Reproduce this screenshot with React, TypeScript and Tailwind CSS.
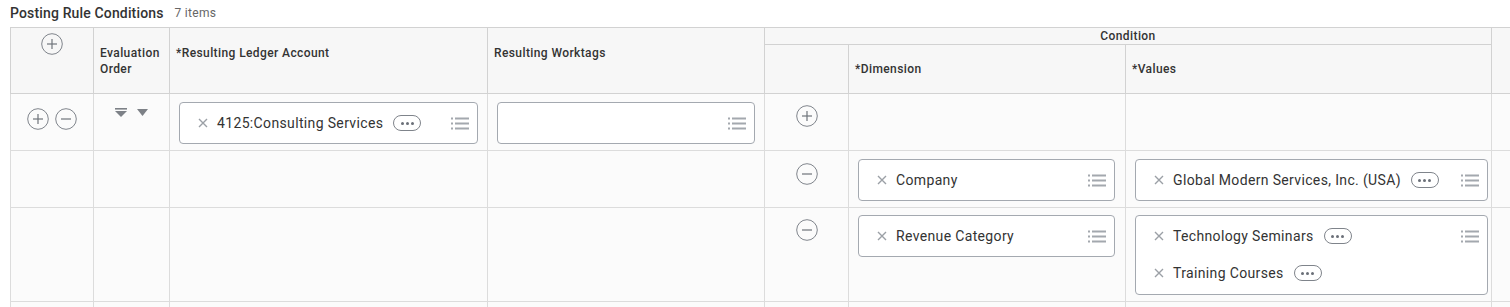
import React from 'react';

const CircleIcon: React.FC<{ minus?: boolean }> = ({ minus }) => (
  <svg width="22" height="22" viewBox="0 0 22 22" className="block">
    <circle cx="11" cy="11" r="10.3" fill="none" stroke="#80858c" strokeWidth="1" />
    <line x1="6" y1="11" x2="16" y2="11" stroke="#6f747b" strokeWidth="1.2" />
    {!minus && <line x1="11" y1="6" x2="11" y2="16" stroke="#6f747b" strokeWidth="1.2" />}
  </svg>
);

const ListIcon = () => (
  <svg width="18" height="13" viewBox="0 0 18 13" className="block">
    <rect x="0" y="0.5" width="2" height="2" fill="#a3a8ae" />
    <rect x="0" y="5.5" width="2" height="2" fill="#a3a8ae" />
    <rect x="0" y="10.5" width="2" height="2" fill="#a3a8ae" />
    <rect x="4" y="0.5" width="14" height="2" fill="#a3a8ae" />
    <rect x="4" y="5.5" width="14" height="2" fill="#a3a8ae" />
    <rect x="4" y="10.5" width="14" height="2" fill="#a3a8ae" />
  </svg>
);

const XIcon = () => (
  <svg width="10" height="10" viewBox="0 0 10 10" className="block shrink-0">
    <path d="M1 1L9 9M9 1L1 9" stroke="#9ba0a6" strokeWidth="1.4" />
  </svg>
);

const MorePill = () => (
  <span className="ml-[10px] inline-flex h-[16px] w-[28px] shrink-0 items-center justify-center gap-[2px] rounded-full border border-[#7f848b]">
    <span className="h-[3px] w-[3px] rounded-full bg-[#6b7078]" />
    <span className="h-[3px] w-[3px] rounded-full bg-[#6b7078]" />
    <span className="h-[3px] w-[3px] rounded-full bg-[#6b7078]" />
  </span>
);

const Chip: React.FC<{ label: string; more?: boolean }> = ({ label, more }) => (
  <div className="flex h-[40px] items-center pl-[18px]">
    <XIcon />
    <span className="ml-[9px] whitespace-nowrap text-[14px] tracking-[0.35px] text-[#333333]">{label}</span>
    {more && <MorePill />}
  </div>
);

const Prompt: React.FC<{ width: string; items: { label: string; more?: boolean }[]; tall?: boolean }> = ({
  width,
  items,
  tall
}) => (
  <div
    className={`${width} ${tall ? 'h-[80px]' : 'h-[42px]'} relative rounded-[4px] border border-[#a4a9b0] bg-white`}
  >
    {items.map((item, i) => (
      <div key={item.label} className={i > 0 ? '-mt-[3px]' : ''}>
        <Chip label={item.label} more={item.more} />
      </div>
    ))}
    <div className="absolute right-[8px] top-[14px]">
      <ListIcon />
    </div>
  </div>
);

const cell = 'border border-[#dcdcdc] align-top p-0';
const head =
  'border border-[#d2d2d2] bg-[#f7f7f7] text-[12px] font-medium tracking-[0.4px] text-[#333333] leading-[16px]';

export default function App() {
  return (
    <div
      className="h-[307px] w-[1510px] overflow-hidden bg-white"
      style={{ fontFamily: 'Roboto, "Liberation Sans", sans-serif' }}
    >
      <div className="flex h-[27px] items-center pl-[10px] pb-[1px]">
        <span className="text-[14px] font-medium tracking-[0.15px] text-[#333333]">Posting Rule Conditions</span>
        <span className="ml-[11px] text-[12px] tracking-[0.3px] text-[#666666]">7 items</span>
      </div>
      <div className="pl-[10px]">
        <table className="w-[1521px] table-fixed border-collapse">
          <colgroup>
            <col className="w-[83px]" />
            <col className="w-[76px]" />
            <col className="w-[318px]" />
            <col className="w-[277px]" />
            <col className="w-[84px]" />
            <col className="w-[277px]" />
            <col className="w-[366px]" />
            <col className="w-[40px]" />
          </colgroup>
          <thead>
            <tr className="h-[17px]">
              <th rowSpan={2} className={`${head} align-top pt-[5px]`}>
                <div className="flex justify-center">
                  <CircleIcon />
                </div>
              </th>
              <th rowSpan={2} className={`${head} align-top px-[6px] pt-[17px] text-left`}>
                Evaluation Order
              </th>
              <th rowSpan={2} className={`${head} align-top px-[6px] pt-[17px] text-left`}>
                *Resulting Ledger Account
              </th>
              <th rowSpan={2} className={`${head} align-top px-[6px] pt-[17px] text-left`}>
                Resulting Worktags
              </th>
              <th colSpan={3} className={`${head} text-center`}>
                Condition
              </th>
              <th rowSpan={2} className={head} />
            </tr>
            <tr className="h-[49px]">
              <th className={head} />
              <th className={`${head} px-[6px] text-left`}>*Dimension</th>
              <th className={`${head} px-[6px] text-left`}>*Values</th>
            </tr>
          </thead>
          <tbody className="bg-[#fbfbfb]">
            <tr className="h-[57px]">
              <td className={cell}>
                <div className="flex justify-center gap-[6px] pt-[14px]">
                  <CircleIcon />
                  <CircleIcon minus />
                </div>
              </td>
              <td className={cell}>
                <div className="flex justify-center gap-[10px] pt-[14px]">
                  <svg width="12" height="10" viewBox="0 0 12 10" className="block">
                    <rect x="0" y="0" width="12" height="1.6" fill="#7d8187" />
                    <path d="M0 3H12L6 9Z" fill="#7d8187" />
                  </svg>
                  <svg width="11" height="10" viewBox="0 0 11 10" className="block">
                    <path d="M0 1H11L5.5 8Z" fill="#7d8187" />
                  </svg>
                </div>
              </td>
              <td className={cell}>
                <div className="pl-[9px] pt-[8px]">
                  <Prompt width="w-[299px]" items={[{ label: '4125:Consulting Services', more: true }]} />
                </div>
              </td>
              <td className={cell}>
                <div className="pl-[9px] pt-[8px]">
                  <Prompt width="w-[258px]" items={[]} />
                </div>
              </td>
              <td className={cell}>
                <div className="flex justify-center pt-[11px]">
                  <CircleIcon />
                </div>
              </td>
              <td className={cell} />
              <td className={cell} />
              <td className={cell} />
            </tr>
            <tr className="h-[57px]">
              <td className={cell} />
              <td className={cell} />
              <td className={cell} />
              <td className={cell} />
              <td className={cell}>
                <div className="flex justify-center pt-[12px]">
                  <CircleIcon minus />
                </div>
              </td>
              <td className={cell}>
                <div className="pl-[9px] pt-[8px]">
                  <Prompt width="w-[257px]" items={[{ label: 'Company' }]} />
                </div>
              </td>
              <td className={cell}>
                <div className="pl-[9px] pt-[8px]">
                  <Prompt
                    width="w-[353px]"
                    items={[{ label: 'Global Modern Services, Inc. (USA)', more: true }]}
                  />
                </div>
              </td>
              <td className={cell} />
            </tr>
            <tr className="h-[94px]">
              <td className={cell} />
              <td className={cell} />
              <td className={cell} />
              <td className={cell} />
              <td className={cell}>
                <div className="flex justify-center pt-[11px]">
                  <CircleIcon minus />
                </div>
              </td>
              <td className={cell}>
                <div className="pl-[9px] pt-[7px]">
                  <Prompt width="w-[257px]" items={[{ label: 'Revenue Category' }]} />
                </div>
              </td>
              <td className={cell}>
                <div className="pl-[9px] pt-[7px]">
                  <Prompt
                    width="w-[353px]"
                    tall
                    items={[
                      { label: 'Technology Seminars', more: true },
                      { label: 'Training Courses', more: true }
                    ]}
                  />
                </div>
              </td>
              <td className={cell} />
            </tr>
            <tr className="h-[57px]">
              <td className={cell} />
              <td className={cell} />
              <td className={cell} />
              <td className={cell} />
              <td className={cell} />
              <td className={cell} />
              <td className={cell} />
              <td className={cell} />
            </tr>
          </tbody>
        </table>
      </div>
    </div>
  );
}
